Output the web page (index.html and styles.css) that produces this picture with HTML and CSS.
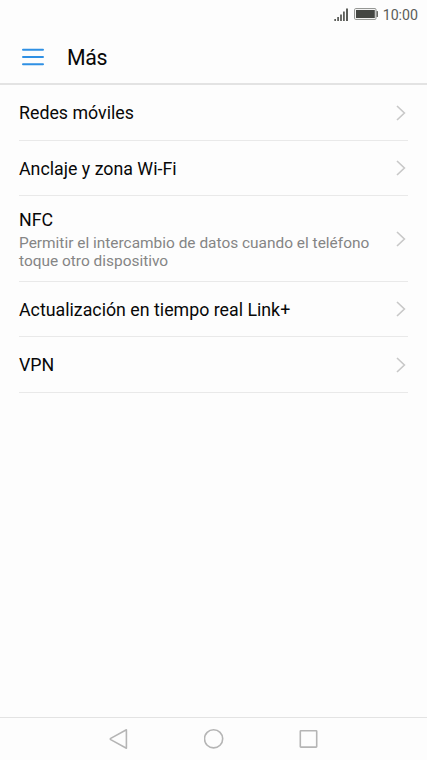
FILE: index.html
```html
<!DOCTYPE html>
<html lang="es">
<head>
<meta charset="utf-8">
<title>Más</title>
<link rel="stylesheet" href="styles.css">
</head>
<body>
<div class="screen">
  <div class="status">
    <svg class="signal" width="15" height="14" viewBox="0 0 15 14" fill="#5c5e5a"><rect x="0.3" y="11" width="1.7" height="2"/><rect x="3.2" y="9" width="1.8" height="4"/><rect x="6.1" y="6.5" width="1.8" height="6.5"/><rect x="9" y="3.5" width="1.8" height="9.5"/><rect x="12" y="0.5" width="2" height="12.5"/></svg>
    <svg class="battery" width="25" height="12" viewBox="0 0 25 12"><rect x="0.6" y="0.6" width="21.4" height="10.8" rx="1" fill="none" stroke="#8b8d89"/><rect x="2" y="2" width="18.8" height="8" fill="#444642"/><rect x="22.5" y="3" width="1.5" height="6" rx=".5" fill="#686a66"/></svg>
    <span class="time">10:00</span>
  </div>
  <header class="header">
    <svg class="menu" width="22" height="18" viewBox="0 0 22 18" fill="none" stroke="#2f90e4" stroke-width="2" stroke-linecap="round"><path d="M1 1.8H21M1 9H21M1 16.2H21"/></svg>
    <h1 class="title">Más</h1>
  </header>
  <main class="list">
    <div class="row tall"><span class="label">Redes móviles</span><svg class="chevron" viewBox="0 0 10 16"><path d="M1 1L8.4 8L1 15"/></svg></div>
    <div class="row"><span class="label">Anclaje y zona Wi-Fi</span><svg class="chevron" viewBox="0 0 10 16"><path d="M1 1L8.4 8L1 15"/></svg></div>
    <div class="row double"><div class="text"><span class="label">NFC</span><p class="summary">Permitir el intercambio de datos cuando el teléfono toque otro dispositivo</p></div><svg class="chevron" viewBox="0 0 10 16"><path d="M1 1L8.4 8L1 15"/></svg></div>
    <div class="row"><span class="label">Actualización en tiempo real Link+</span><svg class="chevron" viewBox="0 0 10 16"><path d="M1 1L8.4 8L1 15"/></svg></div>
    <div class="row tall"><span class="label">VPN</span><svg class="chevron" viewBox="0 0 10 16"><path d="M1 1L8.4 8L1 15"/></svg></div>
  </main>
  <nav class="nav">
    <svg width="20" height="22" viewBox="0 0 20 22"><path d="M17.4 1.8V20.2L1.7 11.6Q.9 11 1.7 10.4Z"/></svg>
    <svg width="20" height="22" viewBox="0 0 20 22"><circle cx="9.6" cy="10.8" r="9.1"/></svg>
    <svg width="20" height="22" viewBox="0 0 20 22"><rect x="1.3" y="2.7" width="16.4" height="16.4" rx=".6"/></svg>
  </nav>
</div>
</body>
</html>
```
FILE: styles.css
```css
* { box-sizing: border-box; }
body { margin: 0; background: #fdfdfd; font-family: Roboto, sans-serif; color: #080808; }
.screen { height: 760px; display: flex; flex-direction: column; background: #fdfdfd; }
.status { height: 30px; padding-right: 9px; display: flex; align-items: center; justify-content: flex-end; color: #5a5c59; }
.signal { margin: -1px 5px 0 0; }
.battery { margin: -2px 4px 0 0; }
.time { font-size: 14.2px; line-height: 16px; }
.header { height: 55px; padding: 0 22px; display: flex; align-items: center; border-bottom: 2px solid #e3e3e3; }
.menu { margin-right: 23px; }
.title { margin: 3px 0 0; font-size: 21.3px; line-height: 26px; font-weight: 400; letter-spacing: -0.4px; }
.list { flex: 1; padding: 0 19px; }
.row { height: 55px; display: flex; align-items: center; justify-content: space-between; padding-right: 2px; border-bottom: 1px solid #e9e9e9; }
.tall { height: 56px; }
.double { height: 86px; }
.label { display: block; font-size: 17.8px; line-height: 22px; }
.row > .label { padding-top: 2px; }
.tall > .label { padding-top: 1px; }
.text { width: 366px; padding-top: 2px; }
.summary { margin: 3px 0 0; font-size: 15.45px; line-height: 18px; color: #858585; }
.chevron { flex: none; width: 10px; height: 16px; fill: none; stroke: #c8c8c8; stroke-width: 1.6; }
.nav { height: 43px; display: flex; justify-content: center; align-items: center; gap: 75px; border-top: 1px solid #e3e3e3; }
.nav svg { fill: none; stroke: #b5b5b5; stroke-width: 1.6; stroke-linejoin: round; }
```
